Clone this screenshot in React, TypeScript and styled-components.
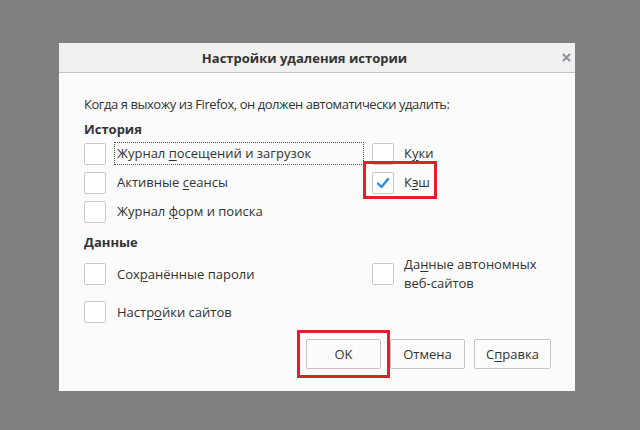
import React from "react";
import styled, { createGlobalStyle } from "styled-components";

const Global = createGlobalStyle`
  html, body {
    margin: 0;
    padding: 0;
    background: #808080;
  }
  body {
    width: 640px;
    height: 430px;
    overflow: hidden;
    font-family: "Open Sans", "Noto Sans", sans-serif;
    color: #333;
  }
`;

const Page = styled.div`
  width: 640px;
  height: 430px;
  padding: 43px 0 0 59px;
  box-sizing: border-box;
`;

const Dialog = styled.div`
  width: 516px;
  height: 348px;
  background: #fbfbfb;
  display: flex;
  flex-direction: column;
`;

const Header = styled.div`
  height: 29px;
  flex: none;
  background: #f0f0f0;
  border-bottom: 1px solid #c3c3c3;
  display: flex;
  align-items: center;
  justify-content: center;
  padding-right: 25px;
  position: relative;
  font-size: 13px;
  font-weight: 700;
  color: #333;
`;

const Close = styled.span`
  position: absolute;
  right: 4px;
  top: 10px;
  width: 9px;
  height: 9px;
  display: flex;
`;

const Body = styled.div`
  padding: 21px 24px 20px 25px;
  display: flex;
  flex-direction: column;
  font-size: 13px;
`;

const Intro = styled.div`
  line-height: 20px;
  height: 20px;
  letter-spacing: -0.45px;
`;

const Heading = styled.div<{ $top: number }>`
  margin-top: ${(p) => p.$top}px;
  line-height: 20px;
  height: 20px;
  font-weight: 700;
`;

const Grid = styled.div<{ $row: number; $top?: number }>`
  display: grid;
  grid-template-columns: 288px 1fr;
  grid-auto-rows: ${(p) => p.$row}px;
  margin-top: ${(p) => p.$top ?? 0}px;
`;

const Item = styled.label`
  display: flex;
  align-items: center;
  position: relative;
`;

const Box = styled.span`
  width: 20px;
  height: 20px;
  flex: none;
  border: 1px solid #c9c9c9;
  border-radius: 2px;
  background: #fff;
  display: flex;
  align-items: center;
  justify-content: center;
`;

const Label = styled.span<{ $focus?: boolean; $gap?: number }>`
  margin-left: ${(p) => p.$gap ?? 8}px;
  padding: 0 2px;
  height: 21px;
  line-height: 21px;
  border: 1px dotted ${(p) => (p.$focus ? "#555" : "transparent")};
  flex: ${(p) => (p.$focus ? 1 : "none")};
  margin-right: ${(p) => (p.$focus ? "8px" : "0")};
`;

const TwoLine = styled.span`
  margin-left: 8px;
  padding: 0 2px;
  line-height: 19px;
`;

const U = styled.span`
  text-decoration: underline;
  text-underline-offset: 2px;
`;

const Mark = styled.span<{ $l: number; $t: number; $w: number; $h: number }>`
  position: absolute;
  left: ${(p) => p.$l}px;
  top: ${(p) => p.$t}px;
  width: ${(p) => p.$w}px;
  height: ${(p) => p.$h}px;
  border: 3px solid #e3202a;
  box-sizing: border-box;
  pointer-events: none;
`;

const Buttons = styled.div`
  margin-top: 8px;
  display: flex;
  justify-content: flex-end;
  gap: 9px;
`;

const ButtonWrap = styled.div`
  position: relative;
  display: flex;
`;

const Button = styled.button<{ $w: number }>`
  width: ${(p) => p.$w}px;
  height: 30px;
  border: 1px solid #c4c4c4;
  border-radius: 2px;
  background: #fbfbfb;
  font-family: inherit;
  font-size: 13px;
  color: #333;
  padding: 0;
`;

const Check = () => (
  <svg width="14" height="12" viewBox="0 0 14 12">
    <path d="M2 6.5 L5.5 10 L12 2" fill="none" stroke="#2c8ee0" strokeWidth="2.4" strokeLinecap="round" strokeLinejoin="round" />
  </svg>
);

export default function App() {
  return (
    <>
      <Global />
      <Page>
        <Dialog>
          <Header>
            Настройки удаления истории
            <Close>
              <svg width="9" height="9" viewBox="0 0 9 9">
                <path d="M1 1 L8 8 M8 1 L1 8" stroke="#8b929a" strokeWidth="2.2" />
              </svg>
            </Close>
          </Header>
          <Body>
            <Intro>Когда я выхожу из Firefox, он должен автоматически удалить:</Intro>
            <Heading $top={5}>История</Heading>
            <Grid $row={29}>
              <Item>
                <Box />
                <Label $focus>
                  Журнал <U>п</U>осещений и загрузок
                </Label>
              </Item>
              <Item>
                <Box />
                <Label $gap={7}>
                  К<U>у</U>ки
                </Label>
              </Item>
              <Item>
                <Box />
                <Label>
                  Активные <U>с</U>еансы
                </Label>
              </Item>
              <Item>
                <Box>
                  <Check />
                </Box>
                <Label $gap={7}>
                  К<U>э</U>ш
                </Label>
                <Mark $l={-9} $t={-7} $w={74} $h={38} />
              </Item>
              <Item>
                <Box />
                <Label>
                  Журнал <U>ф</U>орм и поиска
                </Label>
              </Item>
            </Grid>
            <Heading $top={6}>Данные</Heading>
            <Grid $row={38} $top={3}>
              <Item>
                <Box />
                <Label>
                  Сох<U>р</U>анённые пароли
                </Label>
              </Item>
              <Item>
                <Box />
                <TwoLine>
                  Да<U>н</U>ные автономных
                  <br />
                  веб-сайтов
                </TwoLine>
              </Item>
              <Item>
                <Box />
                <Label>
                  Настр<U>о</U>йки сайтов
                </Label>
              </Item>
            </Grid>
            <Buttons>
              <ButtonWrap>
                <Button $w={75}>OK</Button>
                <Mark $l={-9} $t={-9} $w={93} $h={48} />
              </ButtonWrap>
              <Button $w={75}>Отмена</Button>
              <Button $w={77}>
                С<U>п</U>равка
              </Button>
            </Buttons>
          </Body>
        </Dialog>
      </Page>
    </>
  );
}
